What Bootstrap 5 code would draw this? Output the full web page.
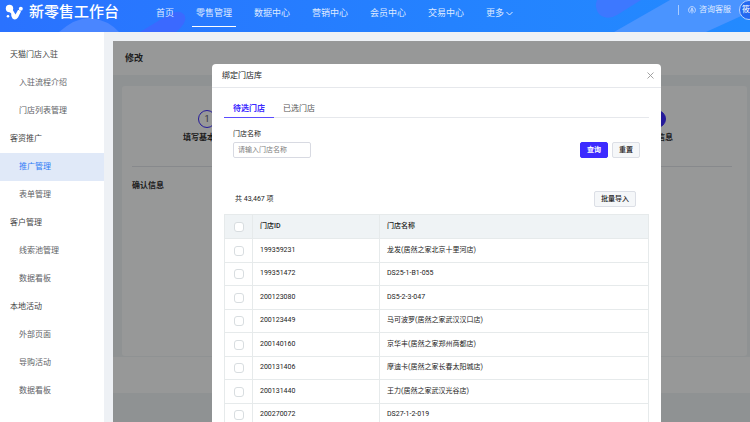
<!DOCTYPE html>
<html lang="zh-CN">
<head>
<meta charset="utf-8">
<meta name="viewport" content="width=device-width, initial-scale=1">
<title>新零售工作台</title>
<link href="https://cdn.jsdelivr.net/npm/bootstrap@5.3.0/dist/css/bootstrap.min.css" rel="stylesheet">
<style>
  body { font: 8px/12px Roboto, "Noto Sans CJK SC", sans-serif; color: #333; background: #eef1f5; height: 100vh; overflow: hidden; }
  .topbar { height: 32px; background: linear-gradient(90deg, #2a72ff, #2482ff 60%, #238aff); color: #dfeaff; font-size: 9px; flex: none; }
  .topbar-art { position: absolute; inset: 0; width: 100%; height: 100%; }
  .brand { color: #fff; font-size: 15px; line-height: 24px; font-weight: 500; gap: 6px; width: 152px; padding-left: 5px; height: 24px; }
  .brand svg { width: 18px; height: 18px; margin-top: 2px; }
  .topnav { gap: 14px; }
  .topnav a { color: #dfeaff; padding: 0 4px; height: 27px; line-height: 27px; border-bottom: 1px solid transparent; font-size: 9px; white-space: nowrap; }
  .topnav a.active { border-color: #fff; }
  .topnav svg { width: 7px; height: 5px; }
  .service { color: #dfeaff; font-size: 8px; height: 10px; line-height: 10px; border-left: 1px solid #a9ccff; padding-left: 9px; gap: 3px; }
  .service svg { width: 8px; height: 8px; }
  .avatar { width: 20px; height: 20px; border: 1px solid #b9d4ff; border-radius: 50%; background: #2368f0; color: #fff; font-size: 8px; line-height: 18px; padding-left: 2px; margin-right: -9px; flex: none; }
  .sidebar { width: 104px; background: #fff; flex: none; padding-top: 9px; }
  .sidebar a { display: block; height: 28px; line-height: 28px; padding-left: 19px; color: #606266; }
  .sidebar .group-name { height: 28px; line-height: 28px; padding-left: 10px; margin: 0; font-size: 8px; font-weight: 400; color: #444; }
  .sidebar a.active { background: #e0e9f8; color: #2f7cf6; }
  .workspace { margin: 9px 0 0 9px; background: #eff4f5; min-width: 0; }
  .page-title { height: 34px; line-height: 34px; padding-left: 12px; margin: 0; background: #fcfdfe; font-size: 9px; font-weight: 700; }
  .step-card { margin: 11px 3px 0 9px; padding: 24px 15px 0 10px; height: 270px; background: #fcfdfe; border-radius: 3px; }
  .steps { height: 57px; border-bottom: 1px solid #e2e4ea; }
  .step-dot { width: 18px; height: 18px; border: 1px solid #3c2bff; border-radius: 50%; line-height: 16px; font-size: 9px; margin: 0 auto 4px; color: #555; }
  .step-dot.current { background: #3c2bff; color: #fff; }
  .section-name { font-size: 8px; line-height: 12px; margin: 13px 0 0; font-weight: 700; }
  .action-bar { height: 36px; background: #fcfdfe; margin-top: 1px; }
  .mask { position: absolute; inset: 0; background: rgba(0,0,0,.4); padding: 23px 89px 0 99px; }
  .dialog { background: #fff; border-radius: 4px 4px 0 0; height: 100%; overflow: hidden; }
  .dialog-head { height: 24px; padding: 0 6px 0 10px; border-bottom: 1px solid #e6e8ec; }
  .dialog-head h2 { font-size: 8px; line-height: 12px; font-weight: 400; margin: 0; color: #222; }
  .close-x { border: 0; background: none; padding: 0; width: 9px; height: 9px; display: flex; align-items: center; justify-content: center; }
  .close-x svg { width: 7px; height: 7px; }
  .dialog-main { padding: 12px 12px 0; }
  .store-tabs { border-bottom: 1px solid #e6e8ec; height: 18px; }
  .store-tabs button { border: 0; background: none; padding: 0 9px; height: 18px; line-height: 17px; color: #555; border-bottom: 1px solid transparent; }
  .store-tabs button.active { color: #3c2bff; font-weight: 700; border-color: #5a4cff; }
  .search-form { padding: 10px 9px 0; }
  .search-form label { font-size: 7px; line-height: 12px; margin-bottom: 2px; display: block; color: #222; }
  .search-form input { width: 78px; height: 16px; border: 1px solid #d8dae2; border-radius: 2px; padding: 0 4px; font-size: 7px; display: block; }
  .search-form input::placeholder { color: #808080; }
  .small-btn { height: 16px; line-height: 14px; padding: 0 6px; font-size: 7px; border: 1px solid #dcdfe6; border-radius: 2px; background: #f5f7f9; color: #222; font-weight: 500; }
  .small-btn.primary { background: #3c2bff; border-color: #3c2bff; color: #fff; font-weight: 700; }
  .list-head { margin: 33px 13px 7px 11px; font-size: 7px; color: #222; }
  .store-table { width: 100%; height: 213px; border-collapse: collapse; table-layout: fixed; font-size: 7px; line-height: 10px; color: #222; }
  .store-table th, .store-table td { border: 1px solid #e6eaeb; padding: 0 7px 1px; }
  .store-table thead tr { background: #eff3f5; height: 24px; }
  .store-table th { font-weight: 500; }
  .pick-col { width: 28px; }
  .id-col { width: 127px; }
  .store-table .pick { padding: 0; }
  .store-table input { appearance: none; width: 10px; height: 10px; border: 1px solid #d8dde0; border-radius: 3px; background: #fff; display: block; margin: 1px auto 0; }
</style>
<script src="https://cdn.jsdelivr.net/npm/bootstrap@5.3.0/dist/js/bootstrap.bundle.min.js"></script>
</head>
<body class="d-flex flex-column">
<header class="topbar position-relative overflow-hidden">
  <svg class="topbar-art" viewBox="0 0 750 32" preserveAspectRatio="none" aria-hidden="true">
    <path d="M59 32Q76 17 91 18Q108 20 119 32Z" fill="#4a86ff"/>
    <path d="M140 32L168 15Q180 8 185 16Q187 23 176 32Z" fill="#3b69ff"/>
    <path d="M597 0H641L617 15Q607 21 599 14Q594 7 597 0Z" fill="#3d78ff"/>
    <path d="M614 32L670 0H750V12L706 32Z" fill="#4a94ff"/>
  </svg>
  <div class="position-relative d-flex align-items-start">
    <a class="brand d-flex align-items-center text-decoration-none" href="#">
      <svg viewBox="0 0 18 18" fill="#fff" aria-hidden="true"><circle cx="4.500" cy="4.500" r="3.700"/><circle cx="15.800" cy="4.800" r="2"/><circle cx="3" cy="12.200" r="1.300"/><path d="M7.500 5.500L10.500 10.500L13 6Q14.500 5.500 16 7.500L13 13.500Q10.500 17 7.500 14.500Q5.800 12.500 6.200 9.500L4 7.500Z"/></svg>
      <span class="text-nowrap">新零售工作台</span>
    </a>
    <nav class="topnav d-flex">
      <a class="text-decoration-none" href="#">首页</a>
      <a class="text-decoration-none active" href="#">零售管理</a>
      <a class="text-decoration-none" href="#">数据中心</a>
      <a class="text-decoration-none" href="#">营销中心</a>
      <a class="text-decoration-none" href="#">会员中心</a>
      <a class="text-decoration-none" href="#">交易中心</a>
      <a class="text-decoration-none" href="#">更多 <svg viewBox="0 0 7 5" fill="none" stroke="#dfeaff" aria-hidden="true"><path d="M.5 1L3.500 4L6.500 1"/></svg></a>
    </nav>
    <div class="ms-auto d-flex align-items-center">
      <a class="service d-flex align-items-center text-decoration-none text-nowrap me-2" href="#">
        <svg viewBox="0 0 8 8" fill="none" stroke="#dfeaff" stroke-width=".8" aria-hidden="true"><path d="M2 6.800A3.400 3.400 0 1 1 6 6.800M2.500 5.500L4 2L5.500 5.500M4 4V7.500"/></svg>
        咨询客服
      </a>
      <div class="avatar text-nowrap overflow-hidden">筱</div>
    </div>
  </div>
</header>
<div class="d-flex flex-grow-1 overflow-hidden">
  <aside class="sidebar">
    <h2 class="group-name">天猫门店入驻</h2>
    <a class="text-decoration-none" href="#">入驻流程介绍</a>
    <a class="text-decoration-none" href="#">门店列表管理</a>
    <h2 class="group-name">客资推广</h2>
    <a class="text-decoration-none active" href="#">推广管理</a>
    <a class="text-decoration-none" href="#">表单管理</a>
    <h2 class="group-name">客户管理</h2>
    <a class="text-decoration-none" href="#">线索池管理</a>
    <a class="text-decoration-none" href="#">数据看板</a>
    <h2 class="group-name">本地活动</h2>
    <a class="text-decoration-none" href="#">外部页面</a>
    <a class="text-decoration-none" href="#">导购活动</a>
    <a class="text-decoration-none" href="#">数据看板</a>
  </aside>
  <main class="workspace flex-grow-1 position-relative overflow-hidden">
    <h1 class="page-title">修改</h1>
    <section class="step-card">
      <div class="steps d-flex justify-content-between text-center fw-bold">
        <div class="col-3"><div class="step-dot fw-normal">1</div>填写基本信息</div>
        <div class="col-3"><div class="step-dot current fw-normal">4</div>确认信息</div>
      </div>
      <h2 class="section-name">确认信息</h2>
    </section>
    <div class="action-bar"></div>
    <div class="mask">
      <div class="dialog" role="dialog" aria-labelledby="dialogTitle">
        <div class="dialog-head d-flex align-items-center justify-content-between">
          <h2 id="dialogTitle">绑定门店库</h2>
          <button class="close-x" type="button" aria-label="关闭"><svg viewBox="0 0 7 7" stroke="#999" stroke-width=".9"><path d="M.5 .5L6.500 6.500M6.500 .5L.5 6.500"/></svg></button>
        </div>
        <div class="dialog-main">
          <div class="store-tabs d-flex" role="tablist">
            <button class="active" type="button" role="tab" aria-selected="true">待选门店</button>
            <button type="button" role="tab" aria-selected="false">已选门店</button>
          </div>
          <form class="search-form d-flex justify-content-between align-items-end">
            <div>
              <label for="storeName">门店名称</label>
              <input id="storeName" type="text" placeholder="请输入门店名称">
            </div>
            <div class="d-flex gap-1">
              <button class="small-btn primary" type="button">查询</button>
              <button class="small-btn" type="button">重置</button>
            </div>
          </form>
          <div class="list-head d-flex justify-content-between align-items-center">
            <span>共 43,467 项</span>
            <button class="small-btn" type="button">批量导入</button>
          </div>
          <table class="store-table">
            <colgroup><col class="pick-col"><col class="id-col"><col></colgroup>
            <thead><tr><th class="pick"><input type="checkbox" aria-label="全选"></th><th>门店ID</th><th>门店名称</th></tr></thead>
            <tbody>
              <tr><td class="pick"><input type="checkbox" aria-label="199359231"></td><td>199359231</td><td>龙发(居然之家北京十里河店)</td></tr>
              <tr><td class="pick"><input type="checkbox" aria-label="199351472"></td><td>199351472</td><td>DS25-1-B1-055</td></tr>
              <tr><td class="pick"><input type="checkbox" aria-label="200123080"></td><td>200123080</td><td>DS5-2-3-047</td></tr>
              <tr><td class="pick"><input type="checkbox" aria-label="200123449"></td><td>200123449</td><td>马可波罗(居然之家武汉汉口店)</td></tr>
              <tr><td class="pick"><input type="checkbox" aria-label="200140160"></td><td>200140160</td><td>京华丰(居然之家郑州商都店)</td></tr>
              <tr><td class="pick"><input type="checkbox" aria-label="200131406"></td><td>200131406</td><td>摩迪卡(居然之家长春太阳城店)</td></tr>
              <tr><td class="pick"><input type="checkbox" aria-label="200131440"></td><td>200131440</td><td>王力(居然之家武汉光谷店)</td></tr>
              <tr><td class="pick"><input type="checkbox" aria-label="200270072"></td><td>200270072</td><td>DS27-1-2-019</td></tr>
            </tbody>
          </table>
        </div>
      </div>
    </div>
  </main>
</div>
</body>
</html>
